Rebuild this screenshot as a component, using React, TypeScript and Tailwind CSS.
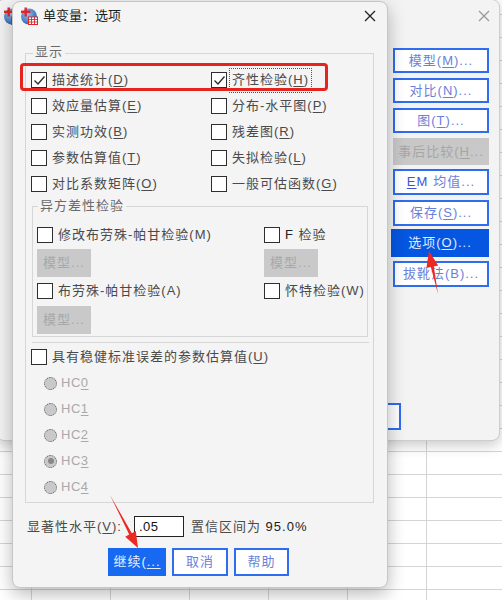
import React from "react";

const FONT = "font-['Liberation_Sans','Noto_Sans_CJK_SC',sans-serif]";

function U({ children }: { children: React.ReactNode }) {
  return <span className="underline decoration-1 underline-offset-[2px]">{children}</span>;
}

function Box({ checked }: { checked?: boolean }) {
  return (
    <span className="w-[16px] h-[16px] border-[1.5px] border-[#2e2e2e] bg-white flex items-center justify-center shrink-0">
      {checked && (
        <svg width="13" height="13" viewBox="0 0 13 13">
          <path d="M1.5 6.5 L5 10 L11.5 2.5" fill="none" stroke="#2e2e2e" strokeWidth="1.4" />
        </svg>
      )}
    </span>
  );
}

function Row({ children, checked, h = "h-[26px]" }: { children: React.ReactNode; checked?: boolean; h?: string }) {
  return (
    <div className={`flex items-center gap-[5px] ${h}`}>
      <Box checked={checked} />
      <span className="text-[#4a4a4a]">{children}</span>
    </div>
  );
}

function Radio({ checked, label, digit }: { checked?: boolean; label: string; digit: string }) {
  return (
    <div className="flex items-center h-[26px] gap-[4px]">
      <span className="w-[13px] h-[13px] rounded-full border-[1.5px] border-[#555] border-dotted bg-[#c9c9c9] flex items-center justify-center">
        {checked && <span className="w-[6px] h-[6px] rounded-full bg-[#888]" />}
      </span>
      <span className="text-[#a9a9a9] tracking-[0.5px]">
        {label}
        <U>{digit}</U>
      </span>
    </div>
  );
}

function AppIcon() {
  return (
    <svg width="18" height="18" viewBox="0 0 18 18" className="shrink-0">
      <defs>
        <radialGradient id="ig" cx="0.4" cy="0.35" r="0.7">
          <stop offset="0" stopColor="#8fc0f0" />
          <stop offset="1" stopColor="#2a62b0" />
        </radialGradient>
      </defs>
      <circle cx="9" cy="9.5" r="8" fill="url(#ig)" />
      <rect x="4.5" y="0.5" width="2.4" height="9" fill="#e0262a" />
      <rect x="1" y="3.6" width="9.5" height="2.4" fill="#e0262a" />
      <rect x="8.5" y="10" width="9" height="7.5" fill="#fff" stroke="#e0262a" strokeWidth="1" />
      <path d="M8.5 12.5 H17.5 M8.5 15 H17.5 M11.5 10 V17.5 M14.5 10 V17.5" stroke="#e0262a" strokeWidth="0.9" />
    </svg>
  );
}

function CloseX({ color }: { color: string }) {
  return (
    <svg width="12" height="12" viewBox="0 0 12 12">
      <path d="M1 1 L11 11 M11 1 L1 11" stroke={color} strokeWidth="1.3" />
    </svg>
  );
}

const parentButtons = [
  { key: "m", cls: "h-[25px] w-[96px]", content: <>模型(<U>M</U>)...</> },
  { key: "n", cls: "mt-[5px] h-[25px] w-[96px]", content: <>对比(<U>N</U>)...</> },
  { key: "t", cls: "mt-[5px] h-[25px] w-[96px]", content: <>图(<U>T</U>)...</> },
  { key: "h", cls: "mt-[5px] h-[27px] w-[96px]", content: <>事后比较(<U>H</U>...</>, disabled: true },
  { key: "e", cls: "mt-[4px] h-[26px] w-[96px]", content: <><span className="text-[#3b55d8] mr-[5px]"><U>E</U>M</span>均值...</> },
  { key: "s", cls: "mt-[5px] h-[26px] w-[96px]", content: <>保存(<U>S</U>)...</> },
  { key: "o", cls: "mt-[3px] h-[28px] w-[98px]", content: <>选项(<U>O</U>)...</>, active: true },
  { key: "b", cls: "mt-[4px] h-[26px] w-[96px]", content: <>拔靴法(B)...</> },
];

export default function App() {
  const cells = Array.from({ length: 8 * 28 });
  return (
    <div className={`relative w-[502px] h-[600px] overflow-hidden bg-white text-[13px] tracking-[1px] ${FONT}`}>
      {/* spreadsheet background */}
      <div className="grid grid-cols-[repeat(8,79px)] auto-rows-[23px] -ml-[47px] -mt-[8px]">
        {cells.map((_, i) => (
          <div key={i} className="border-r border-b border-[#d5d5d5]" />
        ))}
      </div>

      {/* parent dialog */}
      <div className="absolute left-[-4px] top-[-1px] w-[504px] h-[442px] rounded-[8px] border border-[#cdcdcd] bg-[#f3f3f3] shadow-[0_4px_14px_rgba(0,0,0,0.22)] flex flex-col">
        <div className="h-[31px] flex items-center justify-between pl-[6px] pr-[9px] pt-[1px]">
          <AppIcon />
          <CloseX color="#9a9a9a" />
        </div>
        <div className="flex-1 flex justify-end pr-[10px] pt-[17px]">
          <div className="flex flex-col items-end">
            {parentButtons.map((b) => (
              <div
                key={b.key}
                className={`${b.cls} flex items-center justify-center ${
                  b.active
                    ? "bg-[#0556e0] text-[#e3e9ff]"
                    : b.disabled
                    ? "bg-[#c8c8c8] text-[#a6a6a6]"
                    : "bg-white border-2 border-[#2e6cf0] text-[#6c7fd8]"
                }`}
              >
                {b.content}
              </div>
            ))}
          </div>
        </div>
        <div className="flex justify-end pr-[98px] pb-[10px]">
          <div className="w-[90px] h-[27px] border-2 border-[#2e6cf0] bg-white" />
        </div>
      </div>

      {/* front dialog */}
      <div className="absolute left-[12px] top-[1px] w-[376px] h-[587px] rounded-[8px] border border-[#c6c6c6] bg-[#f4f4f4] shadow-[0_6px_18px_rgba(0,0,0,0.28)] flex flex-col">
        <div className="h-[28px] flex items-center pl-[7px] pr-[11px]">
          <AppIcon />
          <span className="ml-[5px] text-[13px] tracking-[0px] text-[#1c1c1c]">单变量：选项</span>
          <span className="ml-auto flex">
            <CloseX color="#222" />
          </span>
        </div>

        {/* 显示 group */}
        <div className="relative mt-[23px] ml-[12px] mr-[13px] border border-[#d6d6d6] pt-[13px] pb-[2px]">
          <span className="absolute left-[7px] top-[-11px] px-[2px] leading-[18px] bg-[#f4f4f4] text-[#6a6a6a]">显示</span>
          <div className="grid grid-cols-[180px_1fr] pl-[5px]">
            <div className="flex flex-col">
              <Row checked>描述统计(<U>D</U>)</Row>
              <Row>效应量估算(<U>E</U>)</Row>
              <Row>实测功效(<U>B</U>)</Row>
              <Row>参数估算值(<U>T</U>)</Row>
              <Row>对比系数矩阵(<U>O</U>)</Row>
            </div>
            <div className="flex flex-col">
              <div className="flex items-center h-[26px] gap-[2px]">
                <Box checked />
                <span className="h-[25px] flex items-center px-[2px] border border-dotted border-[#555] text-[#4a4a4a]">
                  齐性检验(<U>H</U>)
                </span>
              </div>
              <Row>分布-水平图(<U>P</U>)</Row>
              <Row>残差图(<U>R</U>)</Row>
              <Row>失拟检验(<U>L</U>)</Row>
              <Row>一般可估函数(<U>G</U>)</Row>
            </div>
          </div>

          {/* 异方差性检验 */}
          <div className="relative mt-[9px] ml-[6px] mr-[5px] border border-[#d6d6d6] pt-[17px] pb-[2px] pl-[4px]">
            <span className="absolute left-[5px] top-[-10px] px-[2px] leading-[18px] bg-[#f4f4f4] text-[#6a6a6a]">异方差性检验</span>
            <div className="grid grid-cols-[227px_1fr]">
              <div className="flex flex-col">
                <Row h="h-[22px]">修改布劳殊-帕甘检验(M)</Row>
                <div className="mt-[3px] h-[28px] w-[54px] bg-[#c9c9c9] text-[#a8a8a8] flex items-center justify-center">模型...</div>
                <div className="mt-[3px]">
                  <Row h="h-[22px]">布劳殊-帕甘检验(A)</Row>
                </div>
                <div className="mt-[4px] h-[28px] w-[54px] bg-[#c9c9c9] text-[#a8a8a8] flex items-center justify-center">模型...</div>
              </div>
              <div className="flex flex-col">
                <Row h="h-[22px]"><span className="text-[#222]">F</span> 检验</Row>
                <div className="mt-[3px] h-[28px] w-[54px] bg-[#c9c9c9] text-[#a8a8a8] flex items-center justify-center">模型...</div>
                <div className="mt-[3px]">
                  <Row h="h-[22px]">怀特检验(W)</Row>
                </div>
              </div>
            </div>
          </div>

          <div className="mt-[5px] ml-[6px] mr-[4px] h-[1px] bg-[#d6d6d6]" />

          <div className="mt-[3px] pl-[5px]">
            <Row h="h-[22px]">具有稳健标准误差的参数估算值(<U>U</U>)</Row>
          </div>

          <div className="mt-[2px] pl-[18px] flex flex-col">
            <Radio label="HC" digit="0" />
            <Radio label="HC" digit="1" />
            <Radio label="HC" digit="2" />
            <Radio label="HC" digit="3" checked />
            <Radio label="HC" digit="4" />
          </div>
        </div>

        {/* significance */}
        <div className="mt-[13px] h-[21px] flex items-center pl-[14px] text-[#4a4a4a]">
          <span>显著性水平(<U>V</U>):</span>
          <span className="ml-[12px] w-[50px] h-[21px] border border-[#222] bg-white flex items-center pl-[4px] text-[#111] tracking-[0.5px]">.05</span>
          <span className="ml-[7px]">置信区间为 <span className="text-[#222]">95.0%</span></span>
        </div>

        {/* buttons */}
        <div className="mt-[11px] flex pl-[95px] gap-[6px]">
          <div className="w-[58px] h-[28px] bg-[#1769f2] text-[#e8eeff] flex items-center justify-center">继续(<U>...</U></div>
          <div className="w-[56px] h-[28px] bg-white border-2 border-[#2e6cf0] text-[#6c7fd8] flex items-center justify-center">取消</div>
          <div className="w-[55px] h-[28px] bg-white border-2 border-[#2e6cf0] text-[#6c7fd8] flex items-center justify-center">帮助</div>
        </div>
      </div>

      {/* annotation: red rectangle */}
      <div className="absolute left-[20px] top-[63px] w-[308px] h-[28px] border-[3px] border-[#e5241d] rounded-[4px] pointer-events-none" />

      {/* annotation: arrows */}
      <svg className="absolute left-0 top-0 pointer-events-none" width="502" height="600" viewBox="0 0 502 600">
        <polygon points="438,294 433.8,266.4 438.2,265.5 429,251 426.4,267.9 430.8,267" fill="#ec2a22" />
        <polygon points="110,495 131.8,533.2 135.8,531.1 138,548 125.2,536.7 129.2,534.6" fill="#ec2a22" />
      </svg>
    </div>
  );
}
